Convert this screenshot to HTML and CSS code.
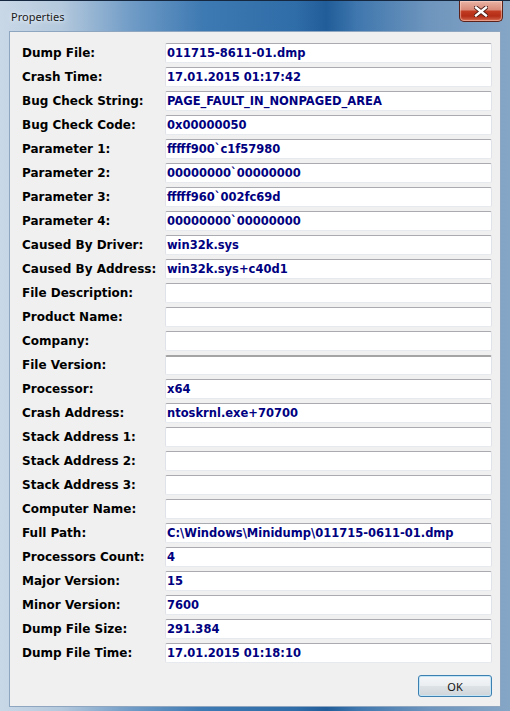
FILE: index.html
```html
<!DOCTYPE html>
<html lang="en">
<head>
    <meta charset="UTF-8">
    <meta name="viewport" content="width=device-width, initial-scale=1.0">
    <title>Properties</title>
    <link rel="stylesheet" href="styles.css">
</head>
<body>
    <div class="window">
        <div class="titlebar">
            <span class="title">Properties</span>
            <button class="close" type="button" aria-label="Close">
                <svg width="14" height="11" viewBox="0 0 14 11">
                    <path d="M2 1.5 L12 9.5 M12 1.5 L2 9.5" stroke="#4a1a14" stroke-width="4.2" stroke-linecap="square"/>
                    <path d="M2 1.5 L12 9.5 M12 1.5 L2 9.5" stroke="#ffffff" stroke-width="2.4" stroke-linecap="square"/>
                </svg>
            </button>
        </div>
        <div class="client">
            <div class="props">
                <div class="label">Dump File:</div>
                <div class="field">011715-8611-01.dmp</div>
                <div class="label">Crash Time:</div>
                <div class="field">17.01.2015 01:17:42</div>
                <div class="label">Bug Check String:</div>
                <div class="field">PAGE_FAULT_IN_NONPAGED_AREA</div>
                <div class="label">Bug Check Code:</div>
                <div class="field">0x00000050</div>
                <div class="label">Parameter 1:</div>
                <div class="field">fffff900`c1f57980</div>
                <div class="label">Parameter 2:</div>
                <div class="field">00000000`00000000</div>
                <div class="label">Parameter 3:</div>
                <div class="field">fffff960`002fc69d</div>
                <div class="label">Parameter 4:</div>
                <div class="field">00000000`00000000</div>
                <div class="label">Caused By Driver:</div>
                <div class="field">win32k.sys</div>
                <div class="label">Caused By Address:</div>
                <div class="field">win32k.sys+c40d1</div>
                <div class="label">File Description:</div>
                <div class="field"></div>
                <div class="label">Product Name:</div>
                <div class="field"></div>
                <div class="label">Company:</div>
                <div class="field"></div>
                <div class="label">File Version:</div>
                <div class="field thick"></div>
                <div class="label">Processor:</div>
                <div class="field">x64</div>
                <div class="label">Crash Address:</div>
                <div class="field">ntoskrnl.exe+70700</div>
                <div class="label">Stack Address 1:</div>
                <div class="field"></div>
                <div class="label">Stack Address 2:</div>
                <div class="field"></div>
                <div class="label">Stack Address 3:</div>
                <div class="field"></div>
                <div class="label">Computer Name:</div>
                <div class="field"></div>
                <div class="label">Full Path:</div>
                <div class="field">C:\Windows\Minidump\011715-0611-01.dmp</div>
                <div class="label">Processors Count:</div>
                <div class="field">4</div>
                <div class="label">Major Version:</div>
                <div class="field">15</div>
                <div class="label">Minor Version:</div>
                <div class="field">7600</div>
                <div class="label">Dump File Size:</div>
                <div class="field">291.384</div>
                <div class="label">Dump File Time:</div>
                <div class="field">17.01.2015 01:18:10</div>
            </div>
            <div class="buttons">
                <button class="ok" type="button">OK</button>
            </div>
        </div>
    </div>
</body>
</html>
```

FILE: styles.css
```css
body {
    margin: 0;
    padding: 0;
    background: #6f93b8;
}
.window {
    width: 510px;
    height: 711px;
    box-sizing: border-box;
    display: flex;
    flex-direction: column;
    border-top: 1px solid #16283f;
    background: linear-gradient(to right, #c9d8e7 0%, #b4c9dd 12%, #6f9bc6 26%, #3d79b2 40%, #2f6da8 58%, #215d99 64%, #3f77ae 70%, #6e95bd 84%, #86a6c6 100%);
}
.titlebar {
    height: 30px;
    display: flex;
    justify-content: space-between;
    align-items: flex-start;
    padding: 0 7px 0 11px;
}
.title {
    font-family: "Noto Sans", "DejaVu Sans", sans-serif;
    font-size: 11px;
    color: #1a1a1a;
    padding-top: 8px;
    text-shadow: 0 0 6px #e8f0f8, 0 0 3px #e8f0f8;
}
.close {
    width: 44px;
    height: 21px;
    margin: 0;
    padding: 0;
    border: 1px solid #5b2219;
    border-top: none;
    border-radius: 0 0 5px 5px;
    background: linear-gradient(to bottom, #e9b2a4 0%, #d98a78 45%, #c23d24 50%, #b42d16 75%, #d2654a 100%);
    box-shadow: inset 0 0 1px 1px rgba(255, 220, 210, 0.55);
    display: flex;
    align-items: center;
    justify-content: center;
}
.close svg {
    display: block;
}
.client {
    flex: 1;
    margin: 0 9px 4px 9px;
    border: 1px solid #8ea6c0;
    background: #f0f0f0;
    padding: 11px 8px 0 12px;
    display: flex;
    flex-direction: column;
}
.props {
    display: grid;
    grid-template-columns: 143px 1fr;
    grid-auto-rows: 20px;
    row-gap: 4px;
}
.label {
    font-family: "DejaVu Sans", sans-serif;
    font-weight: bold;
    font-size: 12px;
    color: #000;
    display: flex;
    align-items: center;
    white-space: nowrap;
}
.field {
    box-sizing: border-box;
    background: #fff;
    border: 1px solid #dfe2e8;
    border-top-color: #a9abb0;
    border-bottom-color: #e6e9ee;
    border-radius: 2px;
    padding: 0 0 0 1px;
    font-family: "DejaVu Sans", sans-serif;
    font-weight: bold;
    font-size: 11.5px;
    color: #000080;
    display: flex;
    align-items: center;
    white-space: nowrap;
    overflow: hidden;
}
.field.thick {
    border-top: 2px solid #a4a4a4;
}
.buttons {
    display: flex;
    justify-content: flex-end;
    margin-top: 12px;
}
.ok {
    width: 74px;
    height: 22px;
    margin: 0;
    padding: 0;
    border: 1px solid #3c7fb1;
    border-radius: 3px;
    background: linear-gradient(to bottom, #f4f6f8 0%, #ebeef1 48%, #dde2e6 52%, #cfd5da 100%);
    box-shadow: inset 0 0 0 1px #c4e5f6;
    font-family: "Noto Sans", "DejaVu Sans", sans-serif;
    font-size: 11px;
    color: #111;
}
```
